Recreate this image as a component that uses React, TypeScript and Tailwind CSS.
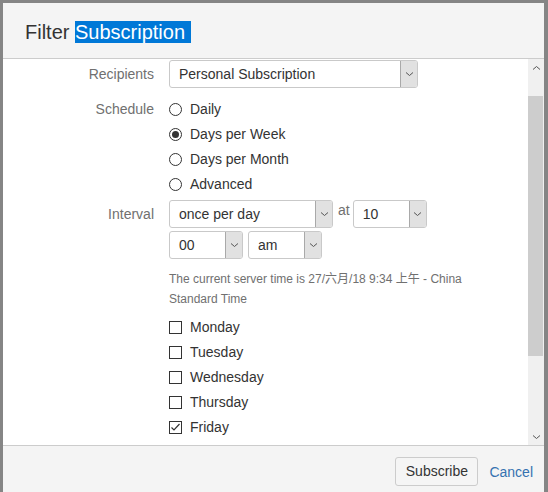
import React from "react";

const font = { fontFamily: '"Liberation Sans", Arial, "Noto Sans CJK SC", sans-serif' };

function Chevron({ className = "" }: { className?: string }) {
  return (
    <svg width="9" height="6" viewBox="0 0 9 6" className={className}>
      <path d="M1 1.5 L4.5 4.5 L8 1.5" fill="none" stroke="#555" strokeWidth="1" />
    </svg>
  );
}

function Select({ value, width }: { value: string; width: string }) {
  return (
    <div className={`flex h-[28px] ${width} shrink-0 rounded-[3px] border border-[#c9c9c9] bg-white`}>
      <div className="flex flex-1 items-center pl-[9px] text-[14px] text-[#333]">{value}</div>
      <div className="flex w-[17px] items-center justify-center rounded-r-[2px] border-l border-[#a9a9a9] bg-[#e1e1e1]">
        <Chevron />
      </div>
    </div>
  );
}

function Radio({ label, checked = false }: { label: string; checked?: boolean }) {
  return (
    <div className="flex h-[25px] items-center gap-[8px]">
      <span className="flex h-[13px] w-[13px] items-center justify-center rounded-full border border-[#333] bg-white">
        {checked && <span className="h-[7px] w-[7px] rounded-full bg-[#333]" />}
      </span>
      <span className="text-[14px] text-[#333]">{label}</span>
    </div>
  );
}

function Check({ label, checked = false }: { label: string; checked?: boolean }) {
  return (
    <div className="flex h-[25px] items-center gap-[8px]">
      <span className="flex h-[13px] w-[13px] items-center justify-center border border-[#333] bg-white">
        {checked && (
          <svg width="11" height="11" viewBox="0 0 11 11">
            <path d="M1.5 5.5 L4 8 L9.5 2" fill="none" stroke="#333" strokeWidth="1.2" />
          </svg>
        )}
      </span>
      <span className="text-[14px] text-[#333]">{label}</span>
    </div>
  );
}

export default function App() {
  const days = ["Monday", "Tuesday", "Wednesday", "Thursday"];

  return (
    <div className="h-[492px] w-[548px] overflow-hidden bg-[#858585] pl-[3px] pt-[3px]" style={font}>
      <div className="flex h-[489px] w-[541px] flex-col bg-white">
        {/* Header */}
        <div className="h-[56px] shrink-0 border-b border-[#cccccc] bg-[#f4f4f4] pl-[22px] pt-[18px]">
          <h2 className="text-[20px] leading-[23px] text-[#333]">
            Filter <span className="bg-[#0078d7] text-white">Subscription{"\u00a0"}</span>
          </h2>
        </div>

        {/* Body */}
        <div className="flex h-[386px] shrink-0">
          <div className="flex-1 overflow-hidden pt-[1px]">
            <div className="grid grid-cols-[151px_1fr] gap-x-[15px]">
              <div className="flex h-[28px] items-center justify-end text-[14px] text-[#707070]">Recipients</div>
              <Select value="Personal Subscription" width="w-[249px]" />

              <div className="mt-[9px] flex h-[25px] items-center justify-end text-[14px] text-[#707070]">Schedule</div>
              <div className="mt-[9px]">
                <Radio label="Daily" />
                <Radio label="Days per Week" checked />
                <Radio label="Days per Month" />
                <Radio label="Advanced" />
              </div>

              <div className="mt-[3px] flex h-[28px] items-center justify-end text-[14px] text-[#707070]">Interval</div>
              <div className="mt-[3px]">
                <div className="flex items-start">
                  <Select value="once per day" width="w-[164px]" />
                  <span className="ml-[5px] mr-[3px] text-[14px] leading-[20px] text-[#707070]">at</span>
                  <Select value="10" width="w-[74px]" />
                </div>
                <div className="mt-[3px] flex gap-[5px]">
                  <Select value="00" width="w-[74px]" />
                  <Select value="am" width="w-[74px]" />
                </div>
                <p className="mt-[10px] w-[310px] text-[12px] leading-[20px] text-[#707070]">
                  The current server time is 27/六月/18 9:34 上午 - China Standard Time
                </p>
                <div className="mt-[6px]">
                  {days.map((d) => (
                    <Check key={d} label={d} />
                  ))}
                  <Check label="Friday" checked />
                </div>
              </div>
            </div>
          </div>

          {/* Scrollbar */}
          <div className="flex w-[16px] flex-col bg-[#f0f0f0]">
            <div className="flex h-[17px] items-center justify-center">
              <Chevron className="rotate-180" />
            </div>
            <div className="mt-[20px] h-[260px] mr-[1px] bg-[#cdcdcd]" />
            <div className="flex-1" />
            <div className="flex h-[17px] items-center justify-center">
              <Chevron />
            </div>
          </div>
        </div>

        {/* Footer */}
        <div className="flex flex-1 items-start justify-end gap-[11px] border-t border-[#cccccc] bg-[#f4f4f4] pr-[11px] pt-[11px]">
          <button className="h-[29px] w-[83px] rounded-[3px] border border-[#cccccc] bg-[#f5f5f5] text-[14px] text-[#333]">
            Subscribe
          </button>
          <a className="mt-[5px] text-[14px] text-[#3572b0]">Cancel</a>
        </div>
      </div>
    </div>
  );
}
